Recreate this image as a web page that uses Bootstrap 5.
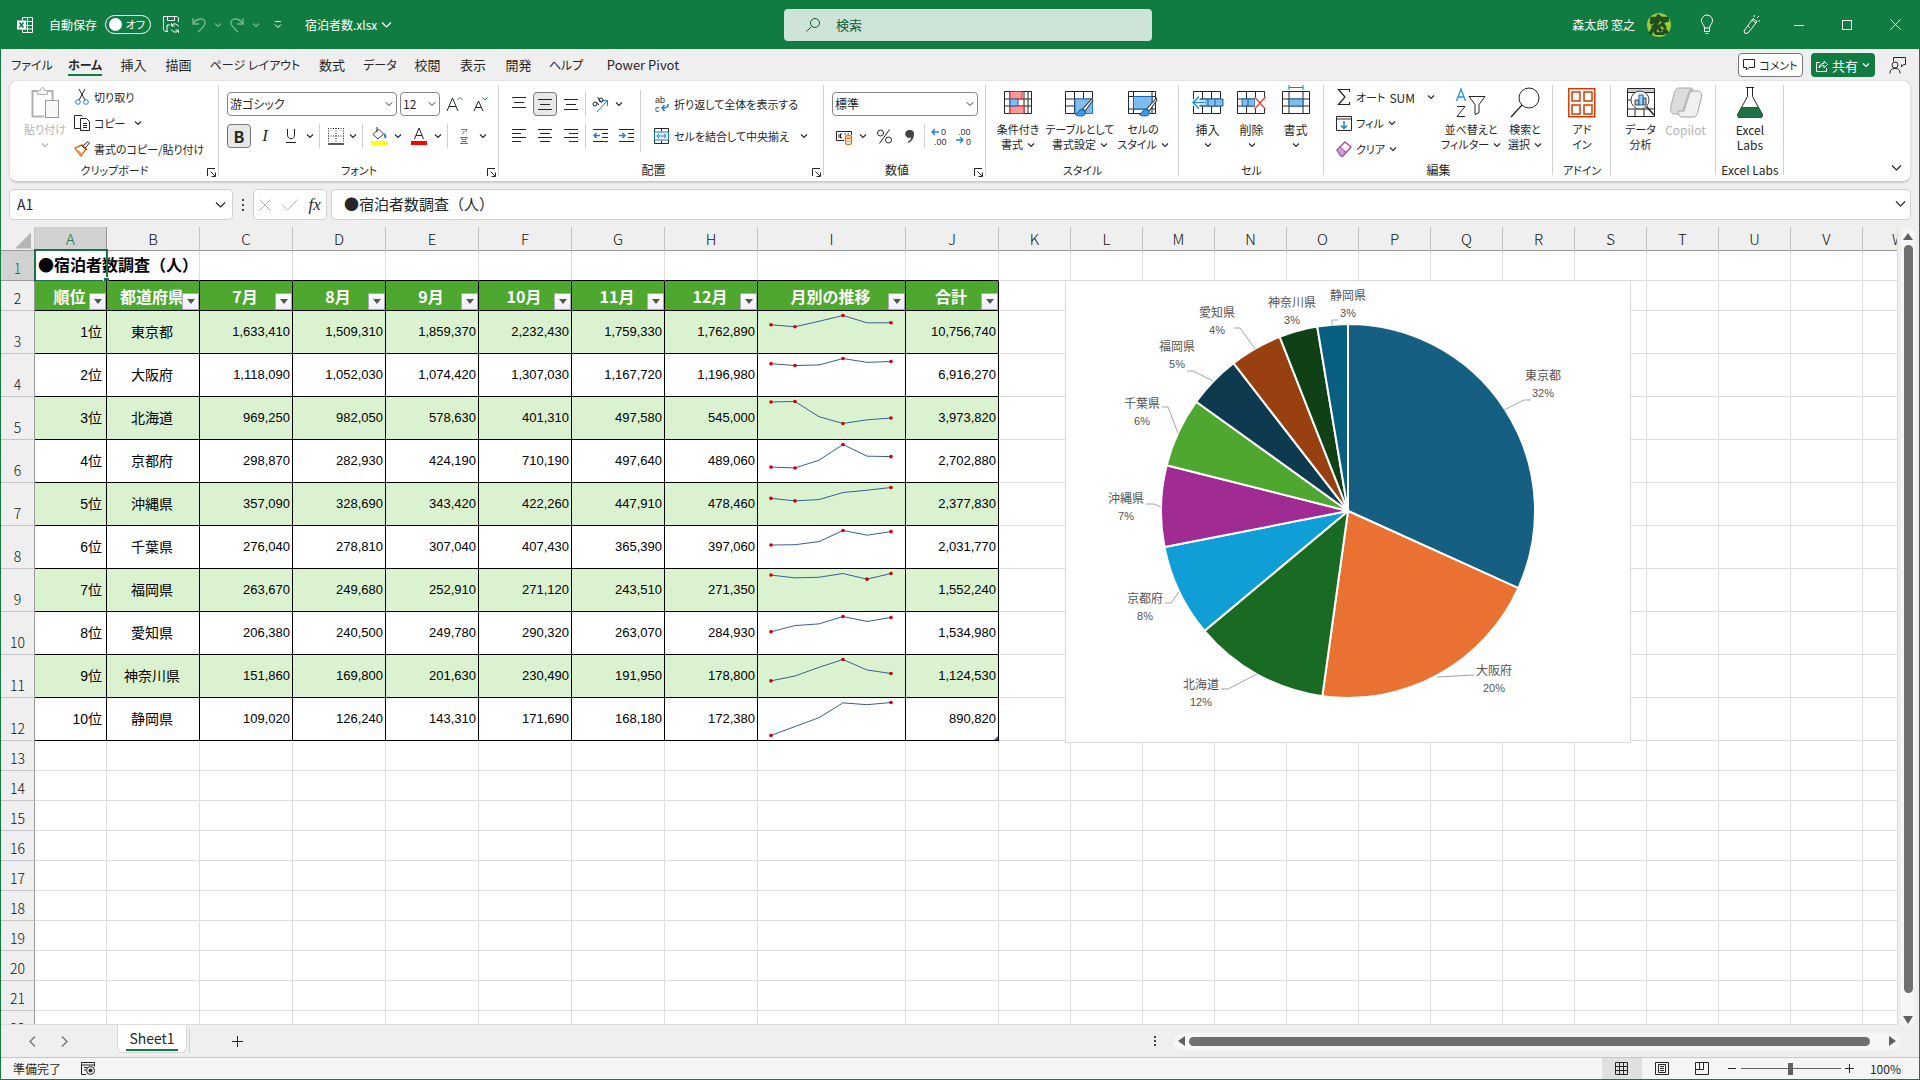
<!DOCTYPE html>
<html lang="ja">
<head>
<meta charset="utf-8">
<meta name="viewport" content="width=device-width, initial-scale=1">
<title>宿泊者数.xlsx - Excel</title>
<link href="https://cdn.jsdelivr.net/npm/bootstrap@5.3.0/dist/css/bootstrap.min.css" rel="stylesheet">
<style>
:root{--xl:#107c41;--ink:#262626;--chrome:#efefef;--line:#d0d0d0}
body{font-family:"Noto Sans CJK JP","Noto Sans",sans-serif;font-size:12px;line-height:15px;color:var(--ink);background:var(--chrome);font-feature-settings:"palt";height:100vh;border:1px solid var(--xl);border-top:0;overflow:hidden}
body>*{flex-shrink:0}
svg{display:block;flex:none;overflow:visible}
svg text{font-family:"Liberation Sans",sans-serif}
button{background:none;border:0;padding:0;color:inherit;font:inherit;font-feature-settings:inherit;white-space:nowrap}
a{color:inherit;text-decoration:none}
.s{fill:none;stroke:currentColor}
.bl{fill:none;stroke:#1f7fd0}
/* title bar */
.titlebar{height:49px;background:var(--xl);color:#fff}
.title-side{flex:1 1 0;min-width:0}
.autosave{width:46px;height:19px;border:1px solid #fff;border-radius:10px;padding:0 5px 0 3px}
.autosave i{width:13px;height:13px;border-radius:50%;background:#fff}
.dim{opacity:.45}
.searchbox{width:368px;height:32px;margin-left:16px;background:#cee3d8;border-radius:4px;color:#0e5c2f;padding:0 22px}
.searchbox input{border:0;background:none;outline:0;width:100%;font-size:13px;color:inherit;padding:0}
.searchbox input::placeholder{color:#0e5c2f;opacity:1}
.winbtn{width:48px;height:48px}
.mr12{margin-right:12px}
.ml20{margin-left:20px}
/* tabs */
.tabrow{height:31px;padding-right:10px}
.tabgrid{display:grid;grid-template-columns:54px 52px 45px 45px 108px 46px 50px 45px 46px 45px 50px 104px;margin-left:4px;font-size:13px}
.tabgrid a{text-align:center;white-space:nowrap;height:27px;padding-top:8px;justify-self:center}
.tabgrid a.on{font-weight:700;border-bottom:2px solid var(--xl)}
.btn-comment{width:65px;height:24px;border:1px solid #777;border-radius:4px;background:#fff;font-size:12px}
.btn-share{width:64px;height:24px;border-radius:4px;background:var(--xl);color:#fff;font-size:13px}
/* ribbon */
.ribbon{margin:0 8px;height:102px;background:#fff;border:1px solid #e2e2e2;border-bottom:1px solid #c8c8c8;border-radius:8px;box-shadow:0 1px 2px #0002;padding-top:3px}
.grp{position:relative;height:95px;display:flex;flex-direction:column;white-space:nowrap}
.grp::after{content:"";position:absolute;right:0;top:1px;height:90px;width:1px;background:var(--line)}
.grp-body{height:78px;display:flex}
.grp-name{height:16px;text-align:center;line-height:16px}
.launch{position:absolute;right:3px;bottom:2px}
.w-clip{width:209px}.w-font{width:280px}.w-align{width:325px}.w-num{width:162px}.w-style{width:193px}.w-cell{width:145px}.w-edit{width:229px}.w-add{width:58px}.w-ana{width:105px}.w-lab{width:68px}
.pl-clip{padding-left:10px}
.rows2{display:flex;flex-direction:column;gap:8px;padding:8px 0 0 8px}
.rows2>div{display:flex;align-items:center;height:24px}
.rows3{display:flex;flex-direction:column}
.rows3 button{height:26px;display:flex;align-items:center;gap:4px}
.ic{width:24px;height:24px;display:flex;align-items:center;justify-content:center}
.ic20{width:20px}
.mx2{margin-left:2px;margin-right:2px}
.ml2{margin-left:2px}
.dd{width:14px;height:24px;display:flex;align-items:center;justify-content:center}
.on-btn{background:#e8e8e8;border:1px solid #777;border-radius:4px}
.vr1{width:1px;height:24px;background:var(--line);margin:0 2px}
.vr-tall{width:1px;height:62px;margin:6px 4px 0 2px;background:var(--line)}
.big{display:flex;flex-direction:column;align-items:center;line-height:15px;padding-top:3px}
.big>svg{margin-bottom:4px}
.big .lb{height:15px;display:flex;align-items:center;gap:4px}
.kana{font-size:11px}
.kana12,.tabgrid a.kana12{font-size:12px}
.w44{width:44px}.w46{width:46px}.w50{width:50px}.w56{width:56px}.w58{width:58px}.w60{width:60px}.w48{width:48px}.w68{width:68px}
.combo{height:24px;border:1px solid #868686;border-radius:4px;font-size:12px;padding:0 14px 0 2px;line-height:20px;color:var(--ink);background-position:right 3px center;background-size:8px 8px;font-feature-settings:"palt"}
.combo-font{width:170px;margin-right:3px}.combo-size{width:40px}.combo-num{width:146px}
.muted-x{color:#b3b3b3}
/* formula bar */
.fbar{margin:7px 8px;height:31px}
.fbox{background:#fff;border:1px solid var(--line);border-radius:4px;height:31px}
.namebox{width:224px;padding:0 6px 0 7px}
.namebox input,.fx-in input{border:0;outline:0;width:100%;padding:0;color:var(--ink);background:none;font-size:15px}
.namebox input{font-size:14px}
.fx-tools{width:74px;margin-right:4px}
.fx-in{padding:0 4px 2px 12px}
.dots{width:20px}
.ser{font:italic 17px/20px "Liberation Serif",serif}
/* sheet */
.sheet-wrap{flex:1 1 0;overflow:hidden;min-height:0}
.sheet{position:relative;overflow:hidden;background:#fff;border-right:1px solid #ddd;border-bottom:1px solid #ddd}
.sheet-tbl{table-layout:fixed;border-collapse:separate;border-spacing:0;width:1933px;background:#fff}
.sheet-tbl td,.sheet-tbl th{padding:0;border:0 solid #dedede;border-width:0 1px 1px 0;height:30px;line-height:18px;font-weight:400}
.sheet-tbl thead th{height:24px;background:var(--chrome);border-right-color:#c4c4c4;border-bottom-color:#999;text-align:center;font-size:15px;font-weight:300;color:#111;line-height:22px}
.sheet-tbl tbody th{background:var(--chrome);border-right-color:#999;border-bottom-color:#c4c4c4;text-align:center;vertical-align:bottom;font-size:14px;font-weight:300;padding-bottom:3px;color:#111}
.sheet-tbl thead th.act,.sheet-tbl tbody th.act{background:#d2d2d2;color:#0b6a37;border-color:#999}
.sheet-tbl tr.tall>*{height:43px}
.sheet-tbl td.dat{border-color:#000;color:#000;font:14px/18px "Liberation Sans","Noto Sans CJK JP",sans-serif;font-feature-settings:normal;vertical-align:middle}
.sheet-tbl td.num{font-size:13px;text-align:right;padding-right:2px}
.sheet-tbl td.rank{text-align:right;padding-right:4px}
.sheet-tbl td.pref{text-align:center;padding-right:2px}
.sheet-tbl tr.band td.dat{background:#daf2d0}
.sheet-tbl td.hd{position:relative;background:#4ea72e;border-color:#000;color:#fff;font-weight:700;font-size:16px;text-align:center;line-height:18px;padding-right:2px;font-feature-settings:normal}
.sheet-tbl td.under{border-bottom-color:#000}
.sheet-tbl td.a1{position:relative;white-space:nowrap;font-weight:700;font-size:16px;line-height:20px;color:#000;padding:0 0 3px 3px;font-feature-settings:normal}
.hd button{position:absolute;right:0;bottom:0;width:17px;height:17px;background:linear-gradient(#fff,#eceef4);border:1px solid #a9adb8;display:flex;align-items:center;justify-content:center}
.selbox{position:absolute;left:-1px;top:-2px;right:-2px;bottom:-2px;border:2px solid #1d7145;pointer-events:none}
.selbox::after{content:"";position:absolute;right:-3px;bottom:-3px;width:6px;height:6px;background:#1d7145;border:1px solid #fff;border-width:1px 0 0 1px}
.corner{display:block;margin:4px 3px 0 auto;width:16px;height:16px;background:#b4b4b4;clip-path:polygon(100% 0,100% 100%,0 100%)}
.tbl-end{position:relative}
.tbl-end::after{content:"";position:absolute;right:0;bottom:0;width:4px;height:4px;background:#3f51b5;clip-path:polygon(100% 0,100% 100%,0 100%)}
.chart{position:absolute;left:1064px;top:53px;width:566px;height:463px;background:#fff;border:1px solid #d9d9d9}
.chart text{font-family:"Noto Sans CJK JP",sans-serif;font-size:12px;fill:#555;text-anchor:middle;font-feature-settings:normal}
.chart text.pc{font:11px "Liberation Sans",sans-serif}
.vscroll{width:21px;padding:0 4px 0 3px}
.vtrack{background:#f6f6f6;border-radius:8px;width:16px;padding:6px 0 1px}
.vthumb{width:9px;background:#707070;border-radius:5px;margin:5px 0 23px}
/* sheet tabs + status */
.tabbar{height:33px;border-bottom:1px solid #c6c6c6}
.tabnav{padding-left:19px;gap:8px;width:116px}
.sh-tab{width:70px;height:28px;background:#fff;border:1px solid #d8d8d8;border-top:0;border-radius:0 0 6px 6px;padding:3px 8px 0;font-size:14px;line-height:19px;text-align:center}
.sh-tab span{display:block;border-bottom:2px solid var(--xl);height:22px}
.addtab{margin-left:33px}
.htrack{background:#f6f6f6;border-radius:9px;height:17px;width:728px;padding:0 5px;margin-right:18px}
.hthumb{height:9px;background:#707070;border-radius:5px;margin:0 19px 0 4px}
.statusbar{height:21px;background:#f5f5f5;padding-left:12px;padding-right:18px}
.view{width:40px;height:21px}
.view.cur{background:#e0e0e0}
.zoomr{appearance:none;width:100px;height:12px;background:linear-gradient(#606060,#606060) center/100% 1px no-repeat;margin:0 4px}
.zoomr::-webkit-slider-thumb{appearance:none;width:5px;height:12px;background:#606060;border:0}
</style>
</head>
<body class="d-flex flex-column">
<svg width="0" height="0" class="position-absolute">
  <symbol id="cv" viewBox="0 0 8 8"><path class="s" d="M1 2.500 4 5.500 7 2.500" stroke-width="1.100"/></symbol>
  <symbol id="cw" viewBox="0 0 11 11"><path class="s" d="M1 3.500 5.500 8 10 3.500" stroke-width="1.200"/></symbol>
  <symbol id="la" viewBox="0 0 9 9"><path class="s" d="M.5 8V.5H8M3.500 3.500 8 8M8.500 4.500v4h-4" stroke-width="1"/></symbol>
  <symbol id="brush" viewBox="0 0 18 20"><path d="M17 1 8 11l2 2.500L17.500 3Z" fill="#fff" stroke="#444"/><path d="M7.500 11.500c-3 0-3 3-6.500 5 2 2 9 3 9.500-2Z" fill="#3b9ae0" stroke="#1565a8"/></symbol>
</svg>

<header class="titlebar d-flex align-items-center">
  <div class="title-side d-flex align-items-center">
    <svg class="ms-3" width="16" height="16"><path class="s" d="M5.500 3.500V.5h10v15h-10v-3M10.500 .5v15M5.500 4.500h10M5.500 8.500h10M5.500 12h10"/><rect y="3.500" width="9" height="9" fill="#fff"/><path d="M2.500 5.500 6.500 10.500M6.500 5.500 2.500 10.500" stroke="#107c41" stroke-width="1.600"/></svg>
    <label for="asv" class="ms-3 me-2">自動保存</label>
    <button id="asv" class="autosave d-flex align-items-center justify-content-between" role="switch" aria-checked="false"><i></i><span class="kana">オフ</span></button>
    <button class="ic ms-2"><svg width="17" height="17"><path class="s" d="M15.500 6V2l-1.500-1.500H.5v13L2 15.500h3M4.500 .5v4h7v-4M4 15V9h3"/><path class="s" d="M15.500 10.500a4 4 0 0 0-7-1M8.500 7v3h3M8.500 13.500a4 4 0 0 0 7 1M15.500 17v-3h-3"/></svg></button>
    <button class="ic dim ms-1"><svg width="14" height="16"><path class="s" d="M1 1v6h6M1 7C4 1 13 0 13 6c0 3-3 5-7 9" stroke-width="1.300"/></svg></button>
    <button class="dd dim"><svg width="8" height="8"><use href="#cv"/></svg></button>
    <button class="ic dim"><svg width="14" height="16"><path class="s" d="M13 1v6H7M13 7C10 1 1 0 1 6c0 3 3 5 7 9" stroke-width="1.300"/></svg></button>
    <button class="dd dim"><svg width="8" height="8"><use href="#cv"/></svg></button>
    <button class="dd ms-2"><svg width="8" height="9"><path class="s" d="M1 1.500h6M1 4.500l3 3 3-3"/></svg></button>
    <button class="d-flex align-items-center gap-1 ml20">宿泊者数.xlsx<svg width="11" height="11"><use href="#cw"/></svg></button>
  </div>
  <div class="searchbox d-flex align-items-center gap-3">
    <svg width="14" height="14"><path class="s" d="M5.500 8.500 .5 13.500"/><circle class="s" cx="9" cy="5" r="4.500"/></svg>
    <input type="text" placeholder="検索" aria-label="検索">
  </div>
  <div class="title-side d-flex align-items-center justify-content-end">
    <span class="mr12">森太郎 窓之</span>
    <svg class="me-3" width="24" height="24"><circle cx="12" cy="12" r="12" fill="#9ccc3c"/><text x="12" y="19" font-size="20" font-weight="900" text-anchor="middle" fill="#1f4d1c" stroke="#1f4d1c">窓</text></svg>
    <button class="ic ms-1 me-4 ps-2"><svg width="12" height="19"><path class="s" d="M3.500 13c0-3-3-4-3-7.500a5.500 5.500 0 0 1 11 0C11.500 9 8.500 10 8.500 13ZM3.500 13v3.500h5V13M4.500 18.500h3"/></svg></button>
    <button class="ic mr12"><svg width="17" height="19"><path class="s" d="M1 16 9 5l4 3-8 10-3 .5ZM9 5l1-1.500 4 3-1 1.500M5 11l2 2M11 2 11.500 0M14 3l2-2M15.500 6H17"/></svg></button>
    <button class="winbtn d-flex align-items-center justify-content-center"><svg width="10" height="10"><path class="s" d="M0 5.500h10"/></svg></button>
    <button class="winbtn d-flex align-items-center justify-content-center"><svg width="10" height="10"><path class="s" d="M.5.5h9v9h-9z"/></svg></button>
    <button class="winbtn d-flex align-items-center justify-content-center"><svg width="11" height="11"><path class="s" d="M.5.5l10 10M10.500.5l-10 10"/></svg></button>
  </div>
</header>

<div class="tabrow d-flex align-items-start">
  <nav class="tabgrid"><a href="#" class="kana12">ファイル</a><a href="#" class="on kana12">ホーム</a><a href="#">挿入</a><a href="#">描画</a><a href="#" class="kana12">ページ レイアウト</a><a href="#">数式</a><a href="#" class="kana12">データ</a><a href="#">校閲</a><a href="#">表示</a><a href="#">開発</a><a href="#" class="kana12">ヘルプ</a><a href="#">Power Pivot</a></nav>
  <div class="ms-auto d-flex align-items-center pt-1">
    <button class="btn-comment d-flex align-items-center justify-content-center gap-1 me-2"><svg width="12" height="12"><path class="s" d="M.5.5h11v8H6L3.500 11V8.500h-3z"/></svg><span class="kana">コメント</span></button>
    <button class="btn-share d-flex align-items-center justify-content-center gap-1 me-2"><svg width="12" height="13"><path class="s" d="M4 3.500H.5v9h10V9M3 9c0-3 2-4.500 5-4.500V2l3.500 3.500L8 9V6.500C6 6.500 4.500 7 3 9Z"/></svg>共有<svg width="8" height="8"><use href="#cv"/></svg></button>
    <button class="ic ml2"><svg width="17" height="17"><path class="s" d="M4.500 4.500v-4h12v7h-2l-2 2.500V7.500M1 16.500c0-4 2-5 5-5s5 1 5 5"/><circle class="s" cx="6" cy="8" r="3"/></svg></button>
  </div>
</div>

<div class="ribbon d-flex">
  <section class="grp w-clip">
    <div class="grp-body pl-clip">
      <button class="big w50 muted-x"><svg width="28" height="31"><path d="M7 4H1.500v25.500H13M16 4h5.500v9" fill="none" stroke="#b0b0b0" stroke-width="2"/><path d="M6.500 7.500v-4h3a2 3 0 0 1 4 0h3v4z" fill="#f4f4f4" stroke="#b0b0b0"/><rect x="14.500" y="13.500" width="13" height="17" fill="#f8f8f8" stroke="#999"/></svg><span class="lb kana">貼り付け</span><span class="lb"><svg width="8" height="8"><use href="#cv"/></svg></span></button>
      <div class="rows3 ms-1 kana">
        <button><svg width="16" height="16"><path class="s" d="M5 0 11 11M11 0 5 11"/><circle cx="4" cy="13" r="2.300" class="bl"/><circle cx="12" cy="13" r="2.300" class="bl"/></svg>切り取り</button>
        <button><svg width="16" height="16"><path class="s" d="M6 13.500H.5V.5h7l1 1M6.500 3.500h6l3 3v9h-9zM9 8.500h4M9 10.500h4M9 12.500h4"/></svg>コピー<svg class="ms-1" width="8" height="8"><use href="#cv"/></svg></button>
        <button><svg width="16" height="16"><path d="M1 7 8 4l4 4-5 7Z" fill="#fff" stroke="#e07b20" stroke-width="1.500"/><path d="M5 10 8 14" stroke="#e07b20"/><path class="s" d="M7 4l6 5M9 5l5-4.500L15.500 2 11 7"/></svg>書式のコピー/貼り付け</button>
      </div>
    </div>
    <div class="grp-name kana">クリップボード</div><button class="launch"><svg width="9" height="9"><use href="#la"/></svg></button>
  </section>

  <section class="grp w-font">
    <div class="grp-body"><div class="rows2">
      <div><select class="form-select combo combo-font" aria-label="フォント"><option>游ゴシック</option></select><select class="form-select combo combo-size" aria-label="サイズ"><option>12</option></select>
        <button class="ic ml2"><svg width="17" height="16"><path class="s" d="M1 15 6.500 2 12 15M3 10.500h7"/><path class="bl" d="M11.500 4 14 1.500 16.500 4"/></svg></button>
        <button class="ic ml2"><svg width="15" height="16"><path class="s" d="M1 15 5.500 5 10 15M3 11.500h5"/><path class="bl" d="M9.500 1.500 12 4l2.500-2.500"/></svg></button></div>
      <div><button class="ic on-btn fw-bold fs-6">B</button><button class="ic ser mx2">I</button><button class="ic"><svg width="10" height="15"><path class="s" d="M1.500 0v6c0 5 7 5 7 0V0M0 13.500h10"/></svg></button><button class="dd"><svg width="8" height="8"><use href="#cv"/></svg></button><span class="vr1"></span>
        <button class="ic ic20 ms-1"><svg width="16" height="17"><path class="s" stroke-dasharray="1 1.500" d="M.5 0v15M8 0v15M15.500 0v15M0 .5h16M0 8h16"/><path d="M0 16h16" stroke="#222" stroke-width="1.500"/></svg></button><button class="dd"><svg width="8" height="8"><use href="#cv"/></svg></button><span class="vr1"></span>
        <button class="ic ic20 ms-1"><svg width="16" height="18"><path d="M2 7.500 7.500 2l5 5L7 12Z" fill="#fff" stroke="#444"/><path class="s" d="M6 0v5"/><path class="bl" d="M13 7c1.500 1.500 1.500 3 1 4" stroke-width="2"/><path d="M0 14h16v4H0z" fill="#ff0"/></svg></button><button class="dd ml2"><svg width="8" height="8"><use href="#cv"/></svg></button>
        <button class="ic ic20 ms-1"><svg width="16" height="18"><path class="s" d="M3.500 12 8 1l4.500 11M5 8.500h6"/><path d="M0 14h16v4H0z" fill="red"/></svg></button><button class="dd ml2"><svg width="8" height="8"><use href="#cv"/></svg></button><span class="vr1"></span>
        <button class="ic ic20 ms-1 text-secondary"><svg width="10" height="17"><path class="s" d="M2 1.500h6L6.500 4M5 3c0 2-1 3-2 3.500M1 9.500h8M1 15.500h8M3 9.500v2h4v-2M3 15.500v-2h4v2"/></svg></button><button class="dd ml2"><svg width="8" height="8"><use href="#cv"/></svg></button></div>
    </div></div>
    <div class="grp-name kana">フォント</div><button class="launch"><svg width="9" height="9"><use href="#la"/></svg></button>
  </section>

  <section class="grp w-align">
    <div class="grp-body">
      <div class="rows2">
        <div><button class="ic"><svg width="14" height="14"><path class="s" d="M0 .5h14M2 5.500h10M0 10.500h14"/></svg></button><button class="ic on-btn mx2"><svg width="14" height="11"><path class="s" d="M0 .5h14M2 5.500h10M0 10.500h14"/></svg></button><button class="ic align-items-end"><svg width="14" height="17"><path class="s" d="M0 .5h14M2 5.500h10M0 10.500h14"/></svg></button><span class="vr1"></span>
          <button class="ic"><svg width="17" height="17"><path class="bl" d="M10 4.500h5.500V10M15.500 4.500 5 16"/><circle class="s" cx="3" cy="8" r="2"/><path class="s" d="M4.500 6 7 9M5.500 1l4 5.500"/><circle class="s" cx="9" cy="4" r="2"/></svg></button><button class="dd"><svg width="8" height="8"><use href="#cv"/></svg></button></div>
        <div><button class="ic"><svg width="14" height="14"><path class="s" d="M0 .5h14M0 4.500h9M0 8.500h14M0 12.500h9"/></svg></button><button class="ic mx2"><svg width="14" height="14"><path class="s" d="M0 .5h14M2 4.500h10M0 8.500h14M2 12.500h10"/></svg></button><button class="ic"><svg width="14" height="14"><path class="s" d="M0 .5h14M5 4.500h9M0 8.500h14M5 12.500h9"/></svg></button><span class="vr1"></span>
          <button class="ic"><svg width="15" height="14"><path class="s" d="M0 .5h15M9 4.500h6M9 8.500h6M0 12.500h15"/><path class="bl" stroke-width="1.500" d="M7 6.500H1M3.500 4 1 6.500 3.500 9"/></svg></button><button class="ic ml2"><svg width="15" height="14"><path class="s" d="M0 .5h15M9 4.500h6M9 8.500h6M0 12.500h15"/><path class="bl" stroke-width="1.500" d="M0 6.500h6M3.500 4 6 6.500 3.500 9"/></svg></button></div>
      </div>
      <span class="vr-tall"></span>
      <div class="rows2 kana">
        <div><button class="d-flex align-items-center gap-1"><svg width="17" height="16"><text x="2" y="7" font-size="9" fill="#333">ab</text><text x="2" y="16" font-size="9" fill="#333">c</text><path class="bl" stroke-width="1.500" d="M15 8v1c0 2-1 3-6 3M11.500 9 9 12l2.500 3"/></svg>折り返して全体を表示する</button></div>
        <div><button class="d-flex align-items-center gap-1"><svg width="17" height="16"><path class="s" d="M1.500.5h14v15h-14zM8.500.5v3M8.500 12.500v3"/><path d="M1.500 4h14v8h-14z" fill="#e3f1fc" stroke="#1f7fd0"/><path class="bl" d="M4 8h9M6 6 4 8l2 2M11 6l2 2-2 2"/></svg>セルを結合して中央揃え</button><button class="dd ms-2"><svg width="8" height="8"><use href="#cv"/></svg></button></div>
      </div>
    </div>
    <div class="grp-name pe-3">配置</div><button class="launch"><svg width="9" height="9"><use href="#la"/></svg></button>
  </section>

  <section class="grp w-num">
    <div class="grp-body"><div class="rows2">
      <div><select class="form-select combo combo-num" aria-label="表示形式"><option>標準</option></select></div>
      <div><button class="ic"><svg width="17" height="17"><path class="s" d="M8 12.500H.5v-9h15V7M3 6v4M6 6H4.500v4H6M8.500 6H10M13 6h-1.500"/><path d="M9.500 9v6c0 2 6 2 6 0V9" fill="#fff" stroke="#e8761f" stroke-width="1.300"/><ellipse cx="12.500" cy="9" rx="3" ry="1.500" fill="#fff" stroke="#e8761f" stroke-width="1.300"/><path d="M9.500 12c0 2 6 2 6 0" fill="none" stroke="#e8761f"/></svg></button><button class="dd"><svg width="8" height="8"><use href="#cv"/></svg></button>
        <button class="ic ml2"><svg width="15" height="15"><path class="s" d="M12.500 .5 2.500 14.500"/><circle class="s" cx="3.500" cy="4" r="3"/><circle class="s" cx="11.500" cy="11" r="3"/></svg></button><button class="ic ml2"><svg width="9" height="13"><path d="M4 0a4 4 0 0 1 4 4c0 5-3 8-6 9l-.5-1C4 11 5 9 5 7.500A4 4 0 1 1 4 0Z" fill="#444"/></svg></button><span class="vr1"></span>
        <button class="ic"><svg width="17" height="16"><path class="bl" stroke-width="1.300" d="M8 4H1M4 1 1 4l3 3"/><text x="10" y="7" font-size="9" fill="#333">0</text><text x="3" y="17" font-size="9" fill="#333">.00</text></svg></button><button class="ic"><svg width="17" height="16"><path class="bl" stroke-width="1.300" d="M1 12h7M5 9l3 3-3 3"/><text x="3" y="7" font-size="9" fill="#333">.00</text><text x="11" y="17" font-size="9" fill="#333">0</text></svg></button></div>
    </div></div>
    <div class="grp-name pe-3">数値</div><button class="launch"><svg width="9" height="9"><use href="#la"/></svg></button>
  </section>

  <section class="grp w-style">
    <div class="grp-body ps-1 kana">
      <button class="big w56"><svg width="28" height="31"><path class="s" d="M.5 4.500h27v22H.5zM.5 12h27M.5 19h27M6 4.500v22M20 4.500v22M24 4.500v22"/><path d="M6 4.500h12V12H6zM6 19h14v7.500H6z" fill="#f99" stroke="#d22"/><path d="M6 12h8v7H6z" fill="#80bdee" stroke="#1565a8"/></svg><span class="lb">条件付き</span><span class="lb">書式<svg width="8" height="8"><use href="#cv"/></svg></span></button>
      <button class="big w68"><svg width="30" height="31"><path class="s" d="M.5 4.500h27v22H.5zM.5 12h27M.5 19h27M9.500 4.500v22M18.500 4.500v22"/><path d="M10 12h17.500v14.500H10z" fill="#80bdee" stroke="#1f7fd0"/><use href="#brush" x="9" y="10" width="20" height="21"/></svg><span class="lb">テーブルとして</span><span class="lb">書式設定<svg width="8" height="8"><use href="#cv"/></svg></span></button>
      <button class="big w58"><svg width="30" height="31"><path class="s" d="M.5 4.500h27v22H.5zM.5 9.500h27M.5 22h27M5.500 4.500v22M24 4.500v22"/><path d="M5.500 9.500H24V22H5.500z" fill="#80bdee" stroke="#1565a8"/><use href="#brush" x="10" y="10" width="20" height="21"/></svg><span class="lb">セルの</span><span class="lb">スタイル<svg width="8" height="8"><use href="#cv"/></svg></span></button>
    </div>
    <div class="grp-name kana">スタイル</div>
  </section>

  <section class="grp w-cell">
    <div class="grp-body justify-content-center">
      <button class="big w44"><svg width="30" height="31"><path class="s" d="M.5 4.500h27v22H.5zM.5 12h27M.5 19h27M9.500 4.500v22M18.500 4.500v22"/><path d="M8 12h22v7H8z" fill="#80bdee" stroke="#1565a8"/><path d="M15 12v7M22 12v7" stroke="#1565a8"/><path d="M12 15.500H0M6 9.500l-6 6 6 6" fill="none" stroke="#fff" stroke-width="4"/><path d="M12 15.500H0M6 9.500l-6 6 6 6" fill="none" stroke="#1f8fe0" stroke-width="1.500"/></svg><span class="lb">挿入</span><span class="lb"><svg width="8" height="8"><use href="#cv"/></svg></span></button>
      <button class="big w44"><svg width="29" height="31"><path class="s" d="M.5 4.500h27v22H.5zM.5 12h27M.5 19h27M9.500 4.500v22M18.500 4.500v22"/><path d="M5 12h13v7H5z" fill="#80bdee" stroke="#1565a8"/><path d="M11 12v7" stroke="#1565a8"/><path d="M18 10h11v12H18z" fill="#fff"/><path d="M17.500 10l11 12M28.500 10l-11 12" stroke="#f0444c" stroke-width="1.500"/></svg><span class="lb">削除</span><span class="lb"><svg width="8" height="8"><use href="#cv"/></svg></span></button>
      <button class="big w44"><svg width="28" height="31"><path class="s" d="M.5 4.500h27v22H.5zM.5 12h27M.5 19h27M7 4.500v22M21 4.500v22"/><path d="M7 12h14v7H7z" fill="#80bdee" stroke="#1565a8"/><path d="M7 .5h14M7-2v5M21-2v5" stroke="#1f7fd0"/></svg><span class="lb">書式</span><span class="lb"><svg width="8" height="8"><use href="#cv"/></svg></span></button>
    </div>
    <div class="grp-name kana">セル</div>
  </section>

  <section class="grp w-edit">
    <div class="grp-body ps-2">
      <div class="rows3 ps-1 flex-fill">
        <button><svg width="16" height="16"><path class="s" d="M13.500 3V.5h-11L9 8l-6.500 7.500h11V13" stroke-width="1.200"/></svg><span class="kana">オート</span> SUM<svg class="ms-2" width="8" height="8"><use href="#cv"/></svg></button>
        <button class="kana"><svg width="16" height="15"><path class="s" d="M.5.5h15v14H.5zM.5 3h15"/><path class="bl" stroke-width="1.500" d="M8 5v7M5 9.500l3 3 3-3"/></svg>フィル<svg width="8" height="8"><use href="#cv"/></svg></button>
        <button class="kana"><svg width="16" height="16"><path d="M1 9 9 1l6 5-8 9H5Z" fill="#fff" stroke="#a349a4" stroke-width="1.300"/><path d="M1 9l3-3 6 5-3 4H5Z" fill="#cf9ad6" stroke="#a349a4"/></svg>クリア<svg width="8" height="8"><use href="#cv"/></svg></button>
      </div>
      <button class="big w60 kana"><svg width="30" height="31"><path class="s" d="M1 19.500h8L1 29.500h8M13 9.500h16l-6 8v8l-4 2v-10z"/><path d="M.5 14 5 2l4.500 12M2 10h6" stroke="#1f8fe0" stroke-width="1.300" fill="none"/></svg><span class="lb">並べ替えと</span><span class="lb">フィルター<svg width="8" height="8"><use href="#cv"/></svg></span></button>
      <button class="big w48 kana me-1"><svg width="28" height="31"><circle class="s" cx="18" cy="11" r="10"/><path class="s" d="M11 18 0 30" stroke-width="1.300"/></svg><span class="lb">検索と</span><span class="lb">選択<svg width="8" height="8"><use href="#cv"/></svg></span></button>
    </div>
    <div class="grp-name">編集</div>
  </section>

  <section class="grp w-add">
    <div class="grp-body justify-content-center kana"><button class="big"><svg width="28" height="31"><path d="M.8 1.800h26v28H.8zM4 5h8v9H4zM16 5h8v9h-8zM4 18h8v9H4zM16 18h8v9h-8z" fill="none" stroke="#d83b01" stroke-width="1.500"/></svg><span class="lb">アド</span><span class="lb">イン</span></button></div>
    <div class="grp-name kana">アドイン</div>
  </section>

  <section class="grp w-ana">
    <div class="grp-body justify-content-center">
      <button class="big w44 kana"><svg width="28" height="31"><path d="M.5 1.500h27v4H.5z" fill="#ccc"/><path class="s" d="M.5 1.500h27v28H.5zM.5 5.500h27M.5 22h27M8 22v7.500M17 22v7.500M.5 13h4"/><circle cx="13" cy="13" r="9" fill="#fff" stroke="#444"/><path d="M8 13h4v5H8zM16 11h3v7h-3z" fill="#bbb" stroke="#444"/><path d="M12 8h4v10h-4z" fill="#9cd0f5" stroke="#1565a8"/><path class="s" d="M19.500 19.500 27 28" stroke-width="1.600"/></svg><span class="lb">データ</span><span class="lb">分析</span></button>
      <button class="big w46 muted-x"><svg width="32" height="31"><path d="M9 1h11c3 0 3 2 4 6h-6l-5 16c-1 3-2 4-5 4H5c-5 0-5-4-4-8L4 7c1-4 2-6 5-6Z" fill="#dcdcdc" stroke="#a8a8a8"/><path d="M23 30H12c-3 0-3-2-4-6h6l5-16c1-3 2-4 5-4h3c5 0 5 4 4 8l-3 12c-1 4-2 6-5 6Z" fill="#f0f0f0" stroke="#a0a0a0"/><path d="M9 24h5l5-16c1-2 2-4 5-4-.5-2-1.500-3-3.500-3-1.500 1-2 3-2.500 5l-5 17c-.7 1-2 1-4 1Z" fill="#c0c0c0"/></svg><span class="lb">Copilot</span></button>
    </div>
  </section>

  <section class="grp w-lab">
    <div class="grp-body justify-content-center"><button class="big"><svg width="26" height="31"><path class="s" d="M9 .5h8M10.500 .5v9L1 27c-1 2 0 3.500 2 3.500h20c2 0 3-1.500 2-3.500L15.500 9.500v-9"/><path d="M4.500 20.500h17L25 27c1 2 0 3.500-2 3.500H3c-2 0-3-1.500-2-3.500Z" fill="#217346" stroke="#1b5e39"/></svg><span class="lb">Excel</span><span class="lb">Labs</span></button></div>
    <div class="grp-name">Excel Labs</div>
  </section>
  <button class="ms-auto me-2 align-self-end mb-1 pb-1"><svg width="11" height="11"><use href="#cw"/></svg></button>
</div>

<div class="fbar d-flex align-items-center">
  <div class="fbox namebox d-flex align-items-center"><input type="text" value="A1" aria-label="名前ボックス"><svg width="11" height="11"><use href="#cw"/></svg></div>
  <span class="dots d-flex justify-content-center"><svg width="2" height="12"><path d="M0 0h2v2H0zM0 5h2v2H0zM0 10h2v2H0z" fill="#444"/></svg></span>
  <div class="fbox fx-tools d-flex align-items-center justify-content-around"><button class="muted-x"><svg width="12" height="12"><path class="s" d="M.5.5l11 11M11.500.5l-11 11"/></svg></button><button class="muted-x"><svg width="16" height="12"><path class="s" d="M.5 6l5 5L15.500.5"/></svg></button><button class="ser">fx</button></div>
  <div class="fbox fx-in flex-fill d-flex align-items-center"><input type="text" value="●宿泊者数調査（人）" aria-label="数式バー"><svg width="11" height="11"><use href="#cw"/></svg></div>
</div>

<main class="sheet-wrap d-flex">
  <div class="sheet flex-fill">
    <table class="sheet-tbl" id="sheet"><colgroup></colgroup><thead><tr></tr></thead><tbody></tbody></table>
    <figure class="chart m-0"><svg id="pie" width="564" height="461" viewBox="1 1 564 461"></svg></figure>
  </div>
  <div class="vscroll d-flex"><div class="vtrack d-flex flex-column align-items-center">
    <svg width="10" height="7"><path d="M5 0l5 7H0z" fill="#606060"/></svg><div class="vthumb flex-fill"></div><svg width="10" height="8"><path d="M0 0h10L5 8z" fill="#606060"/></svg>
  </div></div>
</main>

<div class="tabbar d-flex align-items-center">
  <div class="tabnav d-flex">
    <button class="ic text-secondary"><svg width="7" height="11"><path class="s" d="M6 .5l-5 5 5 5" stroke-width="1.300"/></svg></button>
    <button class="ic text-secondary"><svg width="7" height="11"><path class="s" d="M1 .5l5 5-5 5" stroke-width="1.300"/></svg></button>
  </div>
  <button class="sh-tab align-self-start"><span>Sheet1</span></button>
  <span class="vr1"></span>
  <button class="ic addtab"><svg width="11" height="11"><path class="s" d="M5.500 0v11M0 5.500h11"/></svg></button>
  <span class="dots ms-auto me-2 d-flex justify-content-center"><svg width="2" height="10"><path d="M0 0h2v2H0zM0 4h2v2H0zM0 8h2v2H0z" fill="#444"/></svg></span>
  <div class="htrack d-flex align-items-center"><svg width="7" height="10"><path d="M7 0v10L0 5z" fill="#606060"/></svg><div class="hthumb flex-fill"></div><svg width="7" height="10"><path d="M0 0v10l7-5z" fill="#606060"/></svg></div>
</div>

<footer class="statusbar d-flex align-items-center">
  <span>準備完了</span>
  <button class="ms-3 ps-1"><svg width="15" height="13"><path class="s" d="M5 12.500H.5V.5h13v4M.5 3h13M3 5.500h3M3 8h2"/><circle class="s" cx="9.500" cy="8.500" r="4"/><circle cx="9.500" cy="8.500" r="2" fill="#333"/></svg></button>
  <button class="view cur ms-auto d-flex align-items-center justify-content-center"><svg width="13" height="13"><path class="s" d="M.5.5h12v12H.5zM4.500.5v12M8.500.5v12M.5 4.500h12M.5 8.500h12"/></svg></button>
  <button class="view d-flex align-items-center justify-content-center"><svg width="14" height="13"><path class="s" d="M.5.5h13v12H.5zM3.500 2.500h7v8h-7zM5 4.500h4M5 6.500h4M5 8.500h4"/></svg></button>
  <button class="view d-flex align-items-center justify-content-center"><svg width="14" height="13"><path class="s" d="M.5.5h13v12H.5zM4.500.5v7M.5 7.500h8V.5"/></svg></button>
  <button class="ml2 ps-1"><svg width="9" height="9"><path class="s" d="M0 4.500h8"/></svg></button>
  <input class="zoomr" type="range" min="0" max="100" value="50" aria-label="ズーム">
  <button><svg width="9" height="9"><path class="s" d="M4.500 0v9M0 4.500h9"/></svg></button>
  <span class="ms-3">100%</span>
</footer>

<script src="https://cdn.jsdelivr.net/npm/bootstrap@5.3.0/dist/js/bootstrap.bundle.min.js"></script>
<script>
const cols = 'ABCDEFGHIJKLMNOPQRSTUVW'.split('');
const widths = [72, 93, 93, 93, 93, 93, 93, 93, 148, 93];
const heads = ['順位','都道府県','7月','8月','9月','10月','11月','12月','月別の推移','合計'];
// name, monthly guests Jul-Dec, total, slice colour, label position, leader line
const data = [
  ['東京都',[1633410,1509310,1859370,2232430,1759330,1762890],10756740,'#156082',[478,96],'439,130 459,120 466,120'],
  ['大阪府',[1118090,1052030,1074420,1307030,1167720,1196980],6916270,'#e97132',[429,391],'372,397 409,395'],
  ['北海道',[969250,982050,578630,401310,497580,545000],3973820,'#196b24',[136,405],'192,394 163,409 156,409'],
  ['京都府',[298870,282930,424190,710190,497640,489060],2702880,'#0f9ed5',[80,319],'114,312 106,323 100,323'],
  ['沖縄県',[357090,328690,343420,422260,447910,478460],2377830,'#a02b93',[61,219],'96,227 89,224 81,224'],
  ['千葉県',[276040,278810,307040,407430,365390,397060],2031770,'#4ea72e',[77,124],'113,153 103,127 97,127'],
  ['福岡県',[263670,249680,252910,271120,243510,271350],1552240,'#0d3a4e',[112,67],'148,101 128,91 122,91'],
  ['愛知県',[206380,240500,249780,290320,263070,284930],1534980,'#984010',[152,33],'190,69 175,48 169,48'],
  ['神奈川県',[151860,169800,201630,230490,191950,178800],1124530,'#0f4016',[227,23],''],
  ['静岡県',[109020,126240,143310,171690,168180,172380],890820,'#095f80',[283,16],'267,45 267,40 273,40']
];
const fmt = n => n.toLocaleString('en-US');
const floor = Math.min(...data.flatMap(d => d[1]));

function spark(v) {
  const max = Math.max(...v), min = Math.min(...v);
  const p = v.map((n, i) => [13 + 24 * i, 4.5 + 33 * (max - n) / (max - floor)]);
  const dots = p.filter((q, i) => i === 0 || i === 5 || v[i] === max || v[i] === min)
    .map(q => `<circle cx="${q[0]}" cy="${q[1]}" r="1.800" fill="#d00000"/>`).join('');
  return `<svg width="147" height="42"><polyline points="${p.join(' ')}" fill="none" stroke="#376092"/>${dots}</svg>`;
}

const tbl = document.getElementById('sheet');
tbl.querySelector('colgroup').innerHTML = '<col style="width:34px">' +
  cols.map((c, i) => `<col style="width:${widths[i] || 72}px">`).join('');
tbl.querySelector('thead tr').innerHTML = '<th><span class="corner"></span></th>' +
  cols.map((c, i) => `<th${i ? '' : ' class="act"'}>${c}</th>`).join('');

let html = '';
for (let r = 1; r <= 22; r++) {
  const d = data[r - 3];
  html += `<tr class="${d ? 'tall' : ''}${d && r % 2 ? ' band' : ''}"><th${r === 1 ? ' class="act"' : ''}>${r}</th>`;
  cols.forEach((c, i) => {
    if (r === 1 && i === 0) html += '<td class="a1 under">●宿泊者数調査（人）<span class="selbox"></span></td>';
    else if (r === 1 && i < 10) html += '<td class="under"></td>';
    else if (r === 2 && i < 10) html += `<td class="hd">${heads[i]}<button aria-label="フィルター"><svg width="8" height="5"><path d="M0 0h8L4 5z" fill="#555"/></svg></button></td>`;
    else if (d && i === 0) html += `<td class="dat rank">${r - 2}位</td>`;
    else if (d && i === 1) html += `<td class="dat pref">${d[0]}</td>`;
    else if (d && i < 8) html += `<td class="dat num">${fmt(d[1][i - 2])}</td>`;
    else if (d && i === 8) html += `<td class="dat">${spark(d[1])}</td>`;
    else if (d && i === 9) html += `<td class="dat num${r === 12 ? ' tbl-end' : ''}">${fmt(d[2])}</td>`;
    else html += '<td></td>';
  });
  html += '</tr>';
}
tbl.querySelector('tbody').innerHTML = html;

// whole percentages by largest remainder, so that they add up to 100
const sum = data.reduce((s, d) => s + d[2], 0);
const exact = data.map(d => d[2] / sum * 100), pct = exact.map(Math.floor);
exact.map((e, i) => [e - pct[i], i]).sort((a, b) => b[0] - a[0])
  .slice(0, 100 - pct.reduce((a, b) => a + b)).forEach(([, i]) => pct[i]++);

const cx = 283, cy = 231, R = 187;
const at = f => [cx + R * Math.sin(2 * Math.PI * f), cy - R * Math.cos(2 * Math.PI * f)];
let acc = 0, slices = '', labels = '';
data.forEach(([name, , total, color, [x, y], line], i) => {
  const a = at(acc); acc += total / sum; const b = at(acc);
  slices += `<path d="M${cx} ${cy}L${a}A${R} ${R} 0 0 1 ${b}Z" fill="${color}" stroke="#fff" stroke-width="2"/>`;
  labels += `<polyline points="${line}" fill="none" stroke="#a6a6a6"/><text x="${x}" y="${y + 4}">${name}</text><text class="pc" x="${x}" y="${y + 21}">${pct[i]}%</text>`;
});
document.getElementById('pie').innerHTML = slices + labels;
</script>
</body>
</html>
